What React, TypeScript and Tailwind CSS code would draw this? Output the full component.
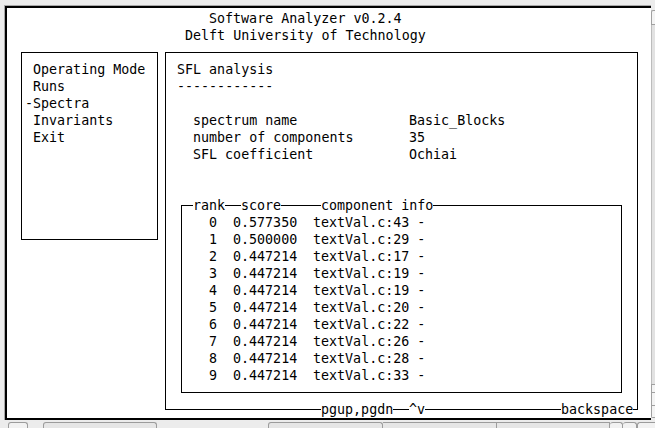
import React from "react";

// 80x24 terminal grid: 8px columns, 17px rows
const ROWS = [
  { rank: 0, score: "0.577350", info: "textVal.c:43 -" },
  { rank: 1, score: "0.500000", info: "textVal.c:29 -" },
  { rank: 2, score: "0.447214", info: "textVal.c:17 -" },
  { rank: 3, score: "0.447214", info: "textVal.c:19 -" },
  { rank: 4, score: "0.447214", info: "textVal.c:19 -" },
  { rank: 5, score: "0.447214", info: "textVal.c:20 -" },
  { rank: 6, score: "0.447214", info: "textVal.c:22 -" },
  { rank: 7, score: "0.447214", info: "textVal.c:26 -" },
  { rank: 8, score: "0.447214", info: "textVal.c:28 -" },
  { rank: 9, score: "0.447214", info: "textVal.c:33 -" },
];

const MENU = [
  { label: "Operating Mode", col: 4 },
  { label: "Runs", col: 4 },
  { label: "-Spectra", col: 3 },
  { label: "Invariants", col: 4 },
  { label: "Exit", col: 4 },
];

function Cell({
  col,
  row,
  children,
  className = "",
}: {
  col: number;
  row: number;
  children: React.ReactNode;
  className?: string;
}) {
  // grid placement computed from data
  return (
    <div
      className={`whitespace-pre ${className}`}
      style={{ gridColumnStart: col, gridRowStart: row }}
    >
      {children}
    </div>
  );
}

function Terminal() {
  return (
    <div className="grid grid-cols-[repeat(80,8px)] grid-rows-[repeat(24,17px)] text-[13.33px] leading-[17px] text-black">
      {/* boxes */}
      <div className="col-[2/span_18] row-[3/span_12] mt-[8px] mb-[8px] ml-[4px] mr-[3px] border border-black" />
      <div className="col-[20/span_60] row-[3/span_22] mt-[8px] mb-[8px] ml-[4px] mr-[3px] border border-black" />
      <div className="col-[22/span_56] row-[12/span_12] mt-[8px] mb-[8px] ml-[4px] mr-[3px] border border-black" />

      {/* title */}
      <div className="col-[26/span_24] row-[1] whitespace-pre">Software Analyzer v0.2.4</div>
      <div className="col-[23/span_30] row-[2] whitespace-pre">Delft University of Technology</div>

      {/* menu */}
      {MENU.map((m, i) => (
        <Cell key={m.label} col={m.col} row={4 + i}>
          {m.label}
        </Cell>
      ))}

      {/* analysis */}
      <div className="col-[22/span_12] row-[4] whitespace-pre">SFL analysis</div>
      <div className="col-[22/span_12] row-[5] whitespace-pre">------------</div>
      <div className="col-[24/span_20] row-[7] whitespace-pre">spectrum name</div>
      <div className="col-[51/span_12] row-[7] whitespace-pre">Basic_Blocks</div>
      <div className="col-[24/span_20] row-[8] whitespace-pre">number of components</div>
      <div className="col-[51/span_2] row-[8] whitespace-pre">35</div>
      <div className="col-[24/span_20] row-[9] whitespace-pre">SFL coefficient</div>
      <div className="col-[51/span_6] row-[9] whitespace-pre">Ochiai</div>

      {/* table header on border */}
      <div className="col-[24/span_4] row-[12] whitespace-pre bg-white">rank</div>
      <div className="col-[30/span_5] row-[12] whitespace-pre bg-white">score</div>
      <div className="col-[40/span_14] row-[12] whitespace-pre bg-white">component info</div>

      {ROWS.map((r, i) => (
        <React.Fragment key={r.rank}>
          <Cell col={26} row={13 + i}>{String(r.rank)}</Cell>
          <Cell col={29} row={13 + i}>{r.score}</Cell>
          <Cell col={39} row={13 + i}>{r.info}</Cell>
        </React.Fragment>
      ))}

      {/* key hints on bottom border */}
      <div className="col-[40/span_9] row-[24] whitespace-pre bg-white">pgup,pgdn</div>
      <div className="col-[51/span_2] row-[24] whitespace-pre bg-white">^v</div>
      <div className="col-[70/span_9] row-[24] whitespace-pre bg-white">backspace</div>
    </div>
  );
}

export default function App() {
  return (
    <div className="w-[655px] h-[428px] bg-[#ececec] overflow-hidden flex flex-col font-['DejaVu_Sans_Mono',monospace]">
      <div className="h-[5px] shrink-0" />
      <div className="flex h-[415px] shrink-0">
        <div className="w-[4px] shrink-0" />
        <div className="w-[647px] shrink-0 border-l border-t border-[#a8a8a8]">
          <div className="h-full border-l-2 border-t-2 border-b-2 border-black bg-white pl-[2px] pt-[2px]">
            <Terminal />
          </div>
        </div>
        {/* scrollbar sliver */}
        <div className="w-[4px] shrink-0 flex flex-col pt-[5px] pb-[2px]">
          <div className="h-[15px] border-l border-t border-b border-[#a0a0a0] rounded-tl-[2px] bg-[#f4f4f4]" />
          <div className="flex-1 border-l border-[#bcbcbc] bg-[#e2e2e2]" />
          <div className="h-[8px] border-l border-t border-[#a0a0a0] bg-[#f4f4f4]" />
          <div className="h-[13px] border-l border-t border-[#a0a0a0] bg-[#f4f4f4]" />
          <div className="h-[13px] border-l border-t border-b border-[#a0a0a0] rounded-bl-[2px] bg-[#f4f4f4]" />
        </div>
      </div>
      {/* bottom tab strip */}
      <div className="flex pt-[2px] h-[8px]">
        <div className="ml-[8px] w-[20px] border-t border-x border-[#9c9c9c] rounded-t-[3px] bg-[#f2f2f2]" />
        <div className="ml-[15px] w-[114px] border-t border-x border-[#9c9c9c] rounded-t-[3px] bg-[#e6e6e6]" />
        <div className="ml-[111px] w-[115px] border-t border-x border-[#9c9c9c] rounded-t-[3px] bg-[#e6e6e6]" />
        <div className="w-[114px] border-t border-r border-[#9c9c9c] bg-[#e6e6e6]" />
        <div className="w-[113px] border-t border-r border-[#9c9c9c] bg-[#e6e6e6]" />
        <div className="w-[13px] border-t border-r border-[#9c9c9c] rounded-t-[3px] bg-[#f2f2f2]" />
        <div className="w-[14px] border-t border-r border-[#9c9c9c] rounded-t-[3px] bg-[#f2f2f2]" />
        <div className="w-[18px] border-t border-l border-[#9c9c9c] rounded-tl-[3px] bg-[#f2f2f2]" />
      </div>
    </div>
  );
}
